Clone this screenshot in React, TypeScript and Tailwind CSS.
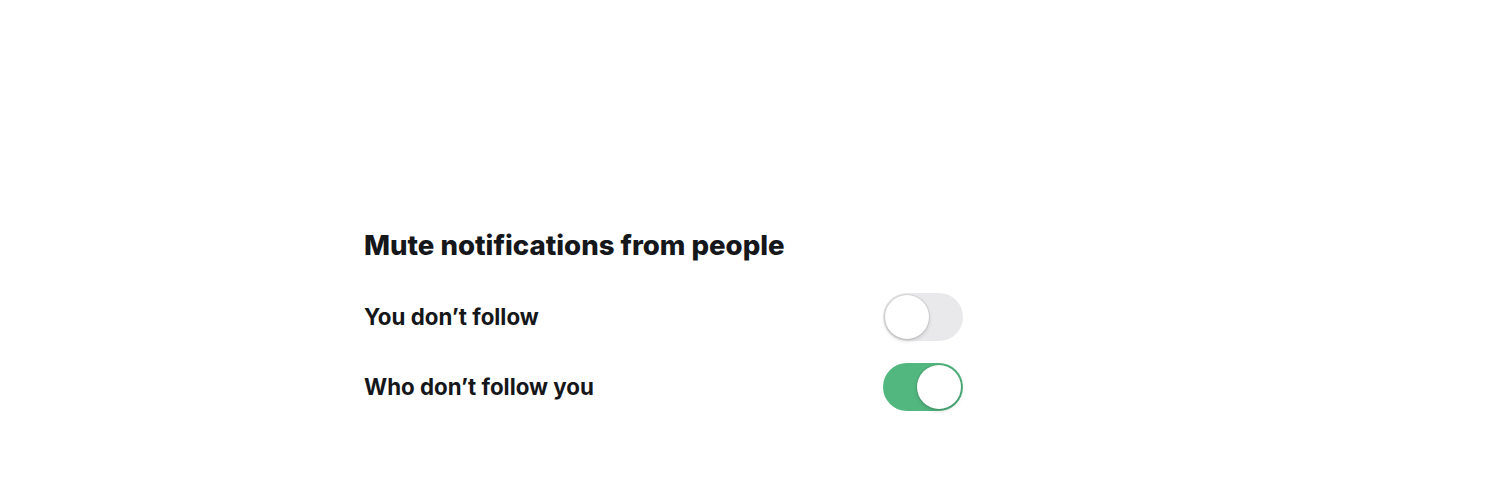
function Toggle({ on }: { on: boolean }) {
  return (
    <div
      className={`flex h-[48px] w-[80px] items-center rounded-full p-[2px] ${
        on ? "justify-end bg-[#52b77f]" : "justify-start bg-[#e9e9eb]"
      }`}
    >
      <div className="h-[44px] w-[44px] rounded-full bg-white shadow-[0_0_0_1px_rgba(0,0,0,0.08),0_2px_4px_rgba(0,0,0,0.15)]" />
    </div>
  );
}

export default function App() {
  const rows = [
    { label: "You don\u2019t follow", on: false },
    { label: "Who don\u2019t follow you", on: true },
  ];
  return (
    <div className="h-[499px] w-[1500px] bg-white font-['Inter',sans-serif] text-[#15171a]">
      <div className="ml-[364px] w-[599px] pt-[229px]">
        <h2 className="text-[27.6px] leading-[32px] font-extrabold">
          Mute notifications from people
        </h2>
        <div className="mt-[32px] flex flex-col gap-[22px]">
          {rows.map((r) => (
            <div key={r.label} className="flex items-center justify-between">
              <span className="text-[22.3px] font-bold">{r.label}</span>
              <Toggle on={r.on} />
            </div>
          ))}
        </div>
      </div>
    </div>
  );
}
